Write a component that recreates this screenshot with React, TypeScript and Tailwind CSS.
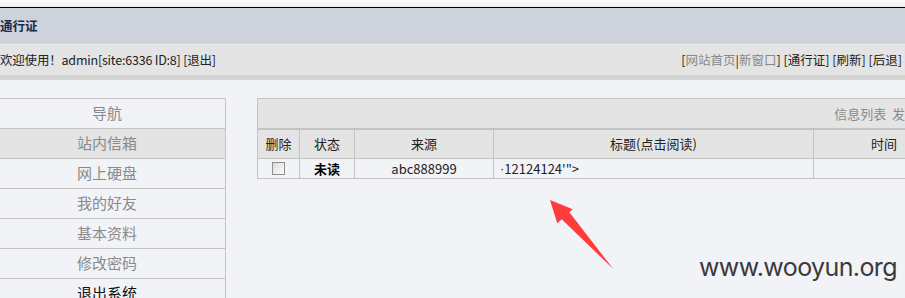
const navItems = [
  { label: '导航', active: false, dark: false },
  { label: '站内信箱', active: true, dark: false },
  { label: '网上硬盘', active: false, dark: false },
  { label: '我的好友', active: false, dark: false },
  { label: '基本资料', active: false, dark: false },
  { label: '修改密码', active: false, dark: false },
  { label: '退出系统', active: false, dark: true },
];

const cols = 'grid grid-cols-[42px_55px_139px_320px_140px]';

export default function App() {
  return (
    <div
      className="relative w-[905px] h-[298px] overflow-hidden bg-[#f2f3f7] text-[13px] text-[#222]"
      style={{ fontFamily: '"Noto Sans CJK SC", "Noto Sans", sans-serif' }}
    >
      <div className="h-[7px] bg-gradient-to-b from-[#fbfbfb] to-[#ededed]" />
      <div className="h-px bg-black" />
      <div className="h-[36px] bg-[#cdd2db] flex items-center text-[12.5px] font-bold text-[#1e2845]">通行证</div>
      <div className="h-px bg-[#eef0f4]" />
      <div className="h-[30px] bg-[#e4e4e4] flex items-center justify-between pr-[3px] text-[12.5px]">
        <span className="whitespace-nowrap tracking-[-0.2px]">欢迎使用！admin[site:6336 ID:8] [退出]</span>
        <span className="whitespace-nowrap">
          [<span className="text-[#888]">网站首页</span>|<span className="text-[#888]">新窗口</span>] [通行证] [刷新] [后退]
        </span>
      </div>
      <div className="h-[5px] bg-[#d3d3d3]" />

      <div className="flex items-start mt-[18px]">
        <div className="-ml-[11px] w-[237px] shrink-0 border-t border-r border-[#c4c4c4]">
          {navItems.map((n) => (
            <div
              key={n.label}
              className={
                'h-[30px] border-b border-[#c4c4c4] flex items-center justify-center text-[15px] ' +
                (n.active ? 'bg-[#e4e4e4] ' : '') +
                (n.dark ? 'text-[#111]' : 'text-[#8a8a8a]')
              }
            >
              {n.label}
            </div>
          ))}
        </div>

        <div className="ml-[31px] shrink-0 w-[698px] border border-[#c4c4c4]">
          <div className="h-[31px] bg-[#e4e4e4] border-b-2 border-[#c4c4c4] flex items-center justify-end pr-[10px] text-[#8a8a8a] whitespace-nowrap">
            信息列表&nbsp;&nbsp;发送信息
          </div>
          <div className={cols + ' h-[29px] bg-[#e4e4e4] border-b border-[#c4c4c4]'}>
            <div className="border-r border-[#c4c4c4] flex items-center justify-center">删除</div>
            <div className="border-r border-[#c4c4c4] flex items-center justify-center">状态</div>
            <div className="border-r border-[#c4c4c4] flex items-center justify-center">来源</div>
            <div className="border-r border-[#c4c4c4] flex items-center justify-center">标题(点击阅读)</div>
            <div className="flex items-center justify-center">时间</div>
          </div>
          <div className={cols + ' h-[19px]'}>
            <div className="border-r border-[#c4c4c4] flex items-center justify-center">
              <span className="w-[13px] h-[13px] border border-[#8f8f8f] bg-gradient-to-br from-[#dcdcdc] to-[#fdfdfd]" />
            </div>
            <div className="border-r border-[#c4c4c4] flex items-center justify-center font-bold text-black">未读</div>
            <div className="border-r border-[#c4c4c4] flex items-center justify-center">abc888999</div>
            <div className="border-r border-[#c4c4c4] flex items-center pl-[6px]">
              <span style={{ fontFamily: '"Liberation Sans", sans-serif' }}>·</span>12124124'"&gt;
            </div>
            <div />
          </div>
        </div>
      </div>

      <svg className="absolute left-[545px] top-[195px]" width="75" height="80" viewBox="0 0 75 80">
        <polygon
          points="5,5 27.7,14.3 24.3,17.3 68.3,74 16.7,24.3 12.3,28.3"
          fill="#ff3b3b"
        />
      </svg>

      <div
        className="absolute left-[699px] top-[255px] text-[25px] leading-none tracking-[-0.6px] text-[#3a3a3a] whitespace-nowrap"
        style={{ fontFamily: 'Inter, sans-serif' }}
      >
        www.wooyun.org
      </div>
    </div>
  );
}
